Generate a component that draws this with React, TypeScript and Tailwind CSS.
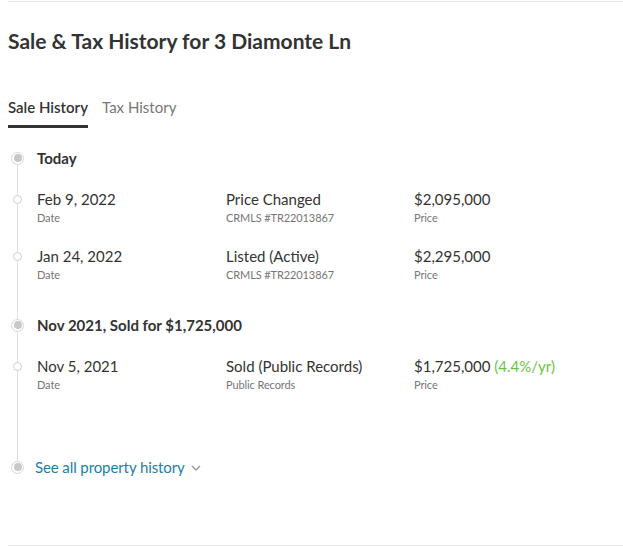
import React from "react";

type Row = { date: string; event: string; source: string; price: string; rate?: string };
type Group = { title: string; rows: Row[] };

const groups: Group[] = [
  {
    title: "Today",
    rows: [
      { date: "Feb 9, 2022", event: "Price Changed", source: "CRMLS #TR22013867", price: "$2,095,000" },
      { date: "Jan 24, 2022", event: "Listed (Active)", source: "CRMLS #TR22013867", price: "$2,295,000" },
    ],
  },
  {
    title: "Nov 2021, Sold for $1,725,000",
    rows: [
      {
        date: "Nov 5, 2021",
        event: "Sold (Public Records)",
        source: "Public Records",
        price: "$1,725,000",
        rate: "(4.4%/yr)",
      },
    ],
  },
];

function BigDot() {
  return (
    <span className="flex h-[13px] w-[13px] items-center justify-center rounded-full border border-[#d6d6d6] bg-white">
      <span className="h-[8px] w-[8px] rounded-full bg-[#c8c8c8]" />
    </span>
  );
}

function SmallDot() {
  return <span className="h-[9px] w-[9px] rounded-full border border-[#cfcfcf] bg-white" />;
}

function Gutter({ big }: { big?: boolean }) {
  return (
    <div className="flex h-5 w-[29px] shrink-0 items-center">
      <div className="flex w-[19px] justify-center">{big ? <BigDot /> : <SmallDot />}</div>
    </div>
  );
}

function HistoryRow({ row }: { row: Row }) {
  return (
    <div className="flex">
      <Gutter />
      <div className="grid flex-1 grid-cols-[189px_188px_1fr]">
        <div>
          <div className="text-[15px] leading-5 text-[#333]">{row.date}</div>
          <div className="mt-px text-[11px] leading-4 tracking-[-0.1px] text-[#767676]">Date</div>
        </div>
        <div>
          <div className="text-[15px] leading-5 text-[#333]">{row.event}</div>
          <div className="mt-px text-[11px] leading-4 tracking-[-0.1px] text-[#767676]">{row.source}</div>
        </div>
        <div>
          <div className="text-[15px] leading-5 text-[#333]">
            {row.price}
            {row.rate && <span className="text-[#6cc43c]"> {row.rate}</span>}
          </div>
          <div className="mt-px text-[11px] leading-4 tracking-[-0.1px] text-[#767676]">Price</div>
        </div>
      </div>
    </div>
  );
}

export default function App() {
  return (
    <div
      className="min-h-[547px] bg-white pl-2 text-[#333]"
      style={{ fontFamily: "Lato, 'Liberation Sans', sans-serif" }}
    >
      <div className="mt-[1px] h-px bg-[#e5e5e5]" />

      <h2 className="mt-[25px] text-[21px] font-bold leading-7 text-[#333]">
        Sale &amp; Tax History for 3 Diamonte Ln
      </h2>

      <div className="mt-[42px] flex gap-[14px] text-[15px] leading-5">
        <div className="border-b-[3px] border-[#333] pb-2 font-semibold text-[#333]">Sale History</div>
        <div className="pb-2 text-[#777]">Tax History</div>
      </div>

      <div className="relative mt-5">
        {/* vertical rail behind the dots */}
        <div className="absolute bottom-[10px] left-[9px] top-[10px] w-px bg-[#e0e0e0]" />

        <div className="relative">
          {groups.map((g, gi) => (
            <div key={g.title} className={gi > 0 ? "mt-[32px]" : ""}>
              <div className="flex">
                <Gutter big />
                <div className="text-[15px] font-bold leading-5 text-[#333]">{g.title}</div>
              </div>
              {g.rows.map((r, ri) => (
                <div key={r.date} className={ri === 0 ? "mt-[21px]" : "mt-[20px]"}>
                  <HistoryRow row={r} />
                </div>
              ))}
            </div>
          ))}

          <div className="mt-[64px] flex">
            <Gutter big />
            <button className="-ml-[2px] flex items-center gap-[6px] text-[15px] leading-5 tracking-[-0.1px] text-[#1a7fa6]">
              See all property history
              <svg width="10" height="6" viewBox="0 0 10 6" fill="none" className="mt-[1px]">
                <path d="M1 1l4 4 4-4" stroke="#9a9a9a" strokeWidth="1.4" />
              </svg>
            </button>
          </div>
        </div>
      </div>

      <div className="mt-[68px] h-px bg-[#e5e5e5]" />
    </div>
  );
}
